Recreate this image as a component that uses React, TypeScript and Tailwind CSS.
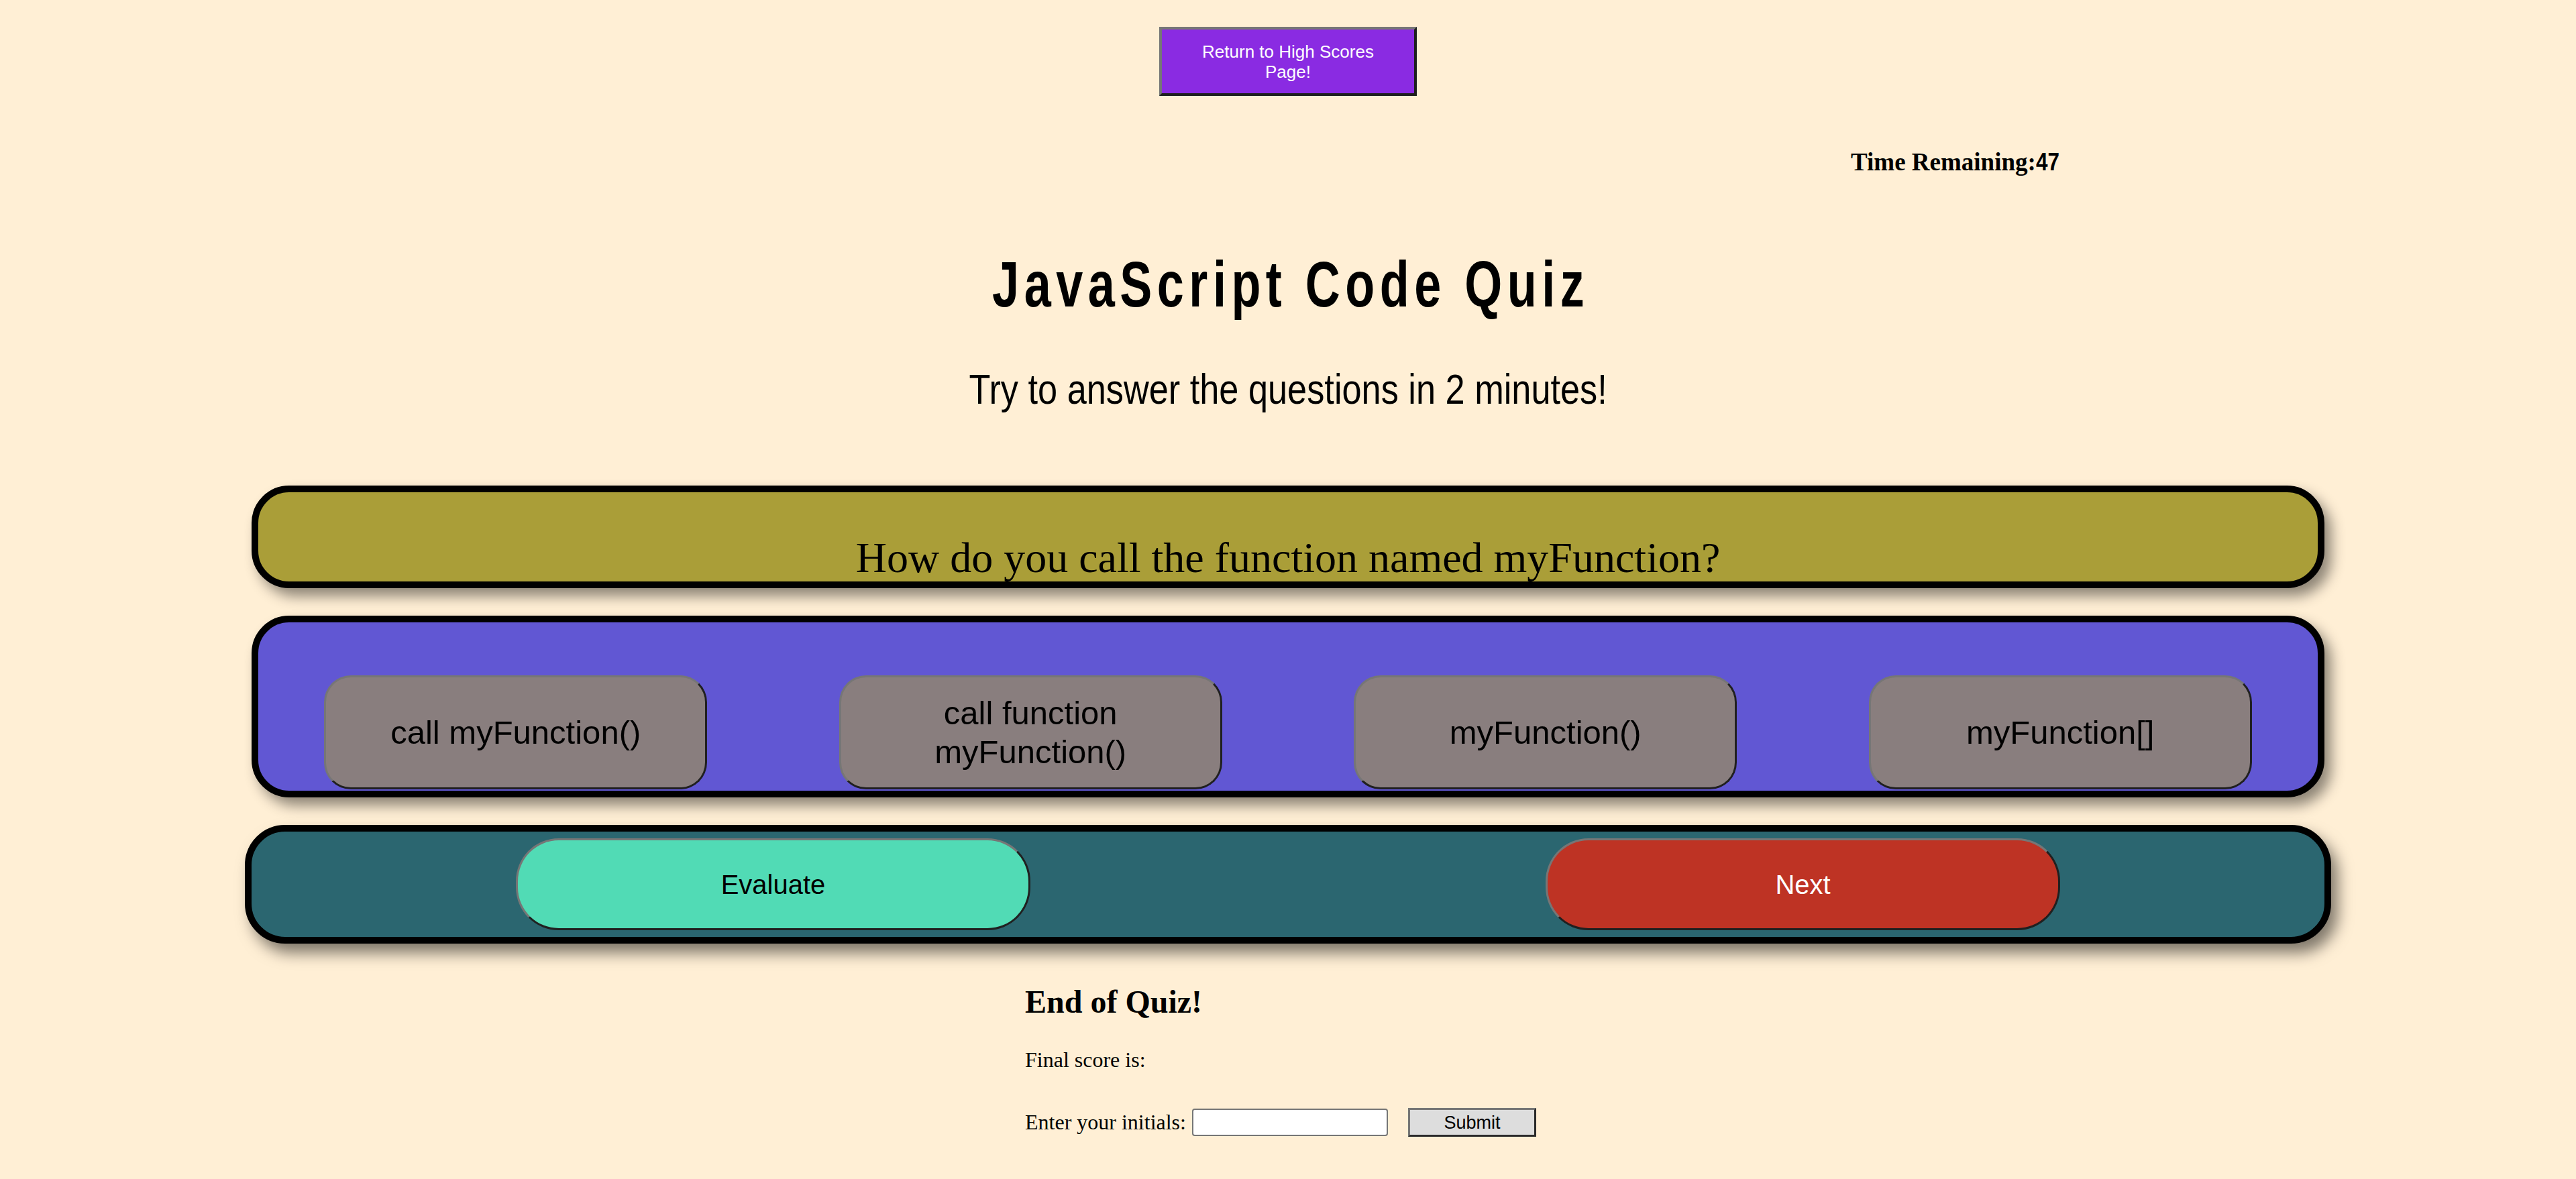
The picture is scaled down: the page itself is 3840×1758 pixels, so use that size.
const answers = [
  "call myFunction()",
  "call function myFunction()",
  "myFunction()",
  "myFunction[]",
];

function AnswerButton({ label }: { label: string }) {
  return (
    <button className="w-[571px] h-[170px] px-[20px] rounded-[40px] bg-[#897e7e] border-[3px] border-t-[#767676] border-l-[#767676] border-b-[#202020] border-r-[#202020] text-black text-[49px] leading-[58px] font-['Liberation_Sans',Arial,sans-serif]">
      {label}
    </button>
  );
}

export default function App() {
  return (
    <div className="min-h-screen w-full bg-[#ffefd5] flex flex-col items-center text-black font-['Liberation_Serif','Times_New_Roman',serif]">
      {/* top link button */}
      <button className="mt-[40px] w-[384px] h-[103px] px-[40px] bg-[#8a2be2] border-4 border-t-[#767676] border-l-[#767676] border-b-[#1e1e1e] border-r-[#1e1e1e] text-white text-[26px] leading-[30px] font-['Liberation_Sans',Arial,sans-serif]">
        Return to High Scores Page!
      </button>

      {/* timer */}
      <div className="mt-[77px] w-full h-[44px] flex justify-end pr-[764px]">
        <p className="text-[37px] leading-[44px] font-bold whitespace-nowrap">
          Time Remaining:
          <span className="inline-block origin-left scale-x-[0.85] text-[37px] font-['Liberation_Sans',Arial,sans-serif]">
            47
          </span>
        </p>
      </div>

      <h1 className="mt-[105px] h-[110px] text-[96px] leading-[110px] font-bold tracking-[10px] font-['Liberation_Sans',Arial,sans-serif] whitespace-nowrap">
        <span className="inline-block pl-[10px] scale-x-[0.75]">JavaScript Code Quiz</span>
      </h1>

      <p className="mt-[65px] h-[72px] text-[63px] leading-[72px] font-['Liberation_Sans',Arial,sans-serif] whitespace-nowrap">
        <span className="inline-block scale-x-[0.83]">Try to answer the questions in 2 minutes!</span>
      </p>

      {/* question */}
      <div className="mt-[108px] w-[3090px] h-[153px] rounded-[56px] border-[10px] border-black bg-[#aa9e38] shadow-[10px_12px_20px_rgba(0,0,0,0.45)] pt-[61px] text-center text-[64px] leading-[74px]">
        How do you call the function named myFunction?
      </div>

      {/* answers */}
      <div className="mt-[41px] w-[3090px] h-[271px] rounded-[56px] border-[10px] border-black bg-[#6157d3] shadow-[10px_12px_20px_rgba(0,0,0,0.45)] flex items-end justify-around pb-[2px]">
        {answers.map((a) => (
          <AnswerButton key={a} label={a} />
        ))}
      </div>

      {/* controls */}
      <div className="mt-[41px] w-[3110px] h-[177px] rounded-[60px] border-[10px] border-black bg-[#2b6670] shadow-[10px_14px_22px_rgba(0,0,0,0.5)] flex items-center justify-between px-[394px]">
        <button className="w-[767px] h-[137px] rounded-[64px] bg-[#51dbb5] border-[3px] border-t-[#767676] border-l-[#767676] border-b-[#202020] border-r-[#202020] text-black text-[40px] font-['Liberation_Sans',Arial,sans-serif]">
          Evaluate
        </button>
        <button className="w-[767px] h-[137px] rounded-[64px] bg-[#be3324] border-[3px] border-t-[#767676] border-l-[#767676] border-b-[#202020] border-r-[#202020] text-white text-[40px] font-['Liberation_Sans',Arial,sans-serif]">
          Next
        </button>
      </div>

      {/* end of quiz */}
      <div className="mt-[59px] w-[784px] flex flex-col items-start">
        <h2 className="text-[48px] leading-[56px] font-bold">End of Quiz!</h2>
        <p className="mt-[40px] text-[32px] leading-[37px]">Final score is:</p>
        <div className="mt-[53px] flex items-center">
          <label className="text-[32px] leading-[37px] mr-[9px]">Enter your initials:</label>
          <input
            type="text"
            className="w-[292px] h-[41px] bg-white border-2 border-[#767676] rounded-[4px] px-2 text-[26px] outline-none"
          />
          <button className="ml-[30px] w-[191px] h-[43px] bg-[#dddddd] border-[3px] border-t-[#767676] border-l-[#767676] border-b-[#2a2a2a] border-r-[#2a2a2a] text-[27px] leading-[30px] text-black font-['Liberation_Sans',Arial,sans-serif]">
            Submit
          </button>
        </div>
      </div>
    </div>
  );
}
